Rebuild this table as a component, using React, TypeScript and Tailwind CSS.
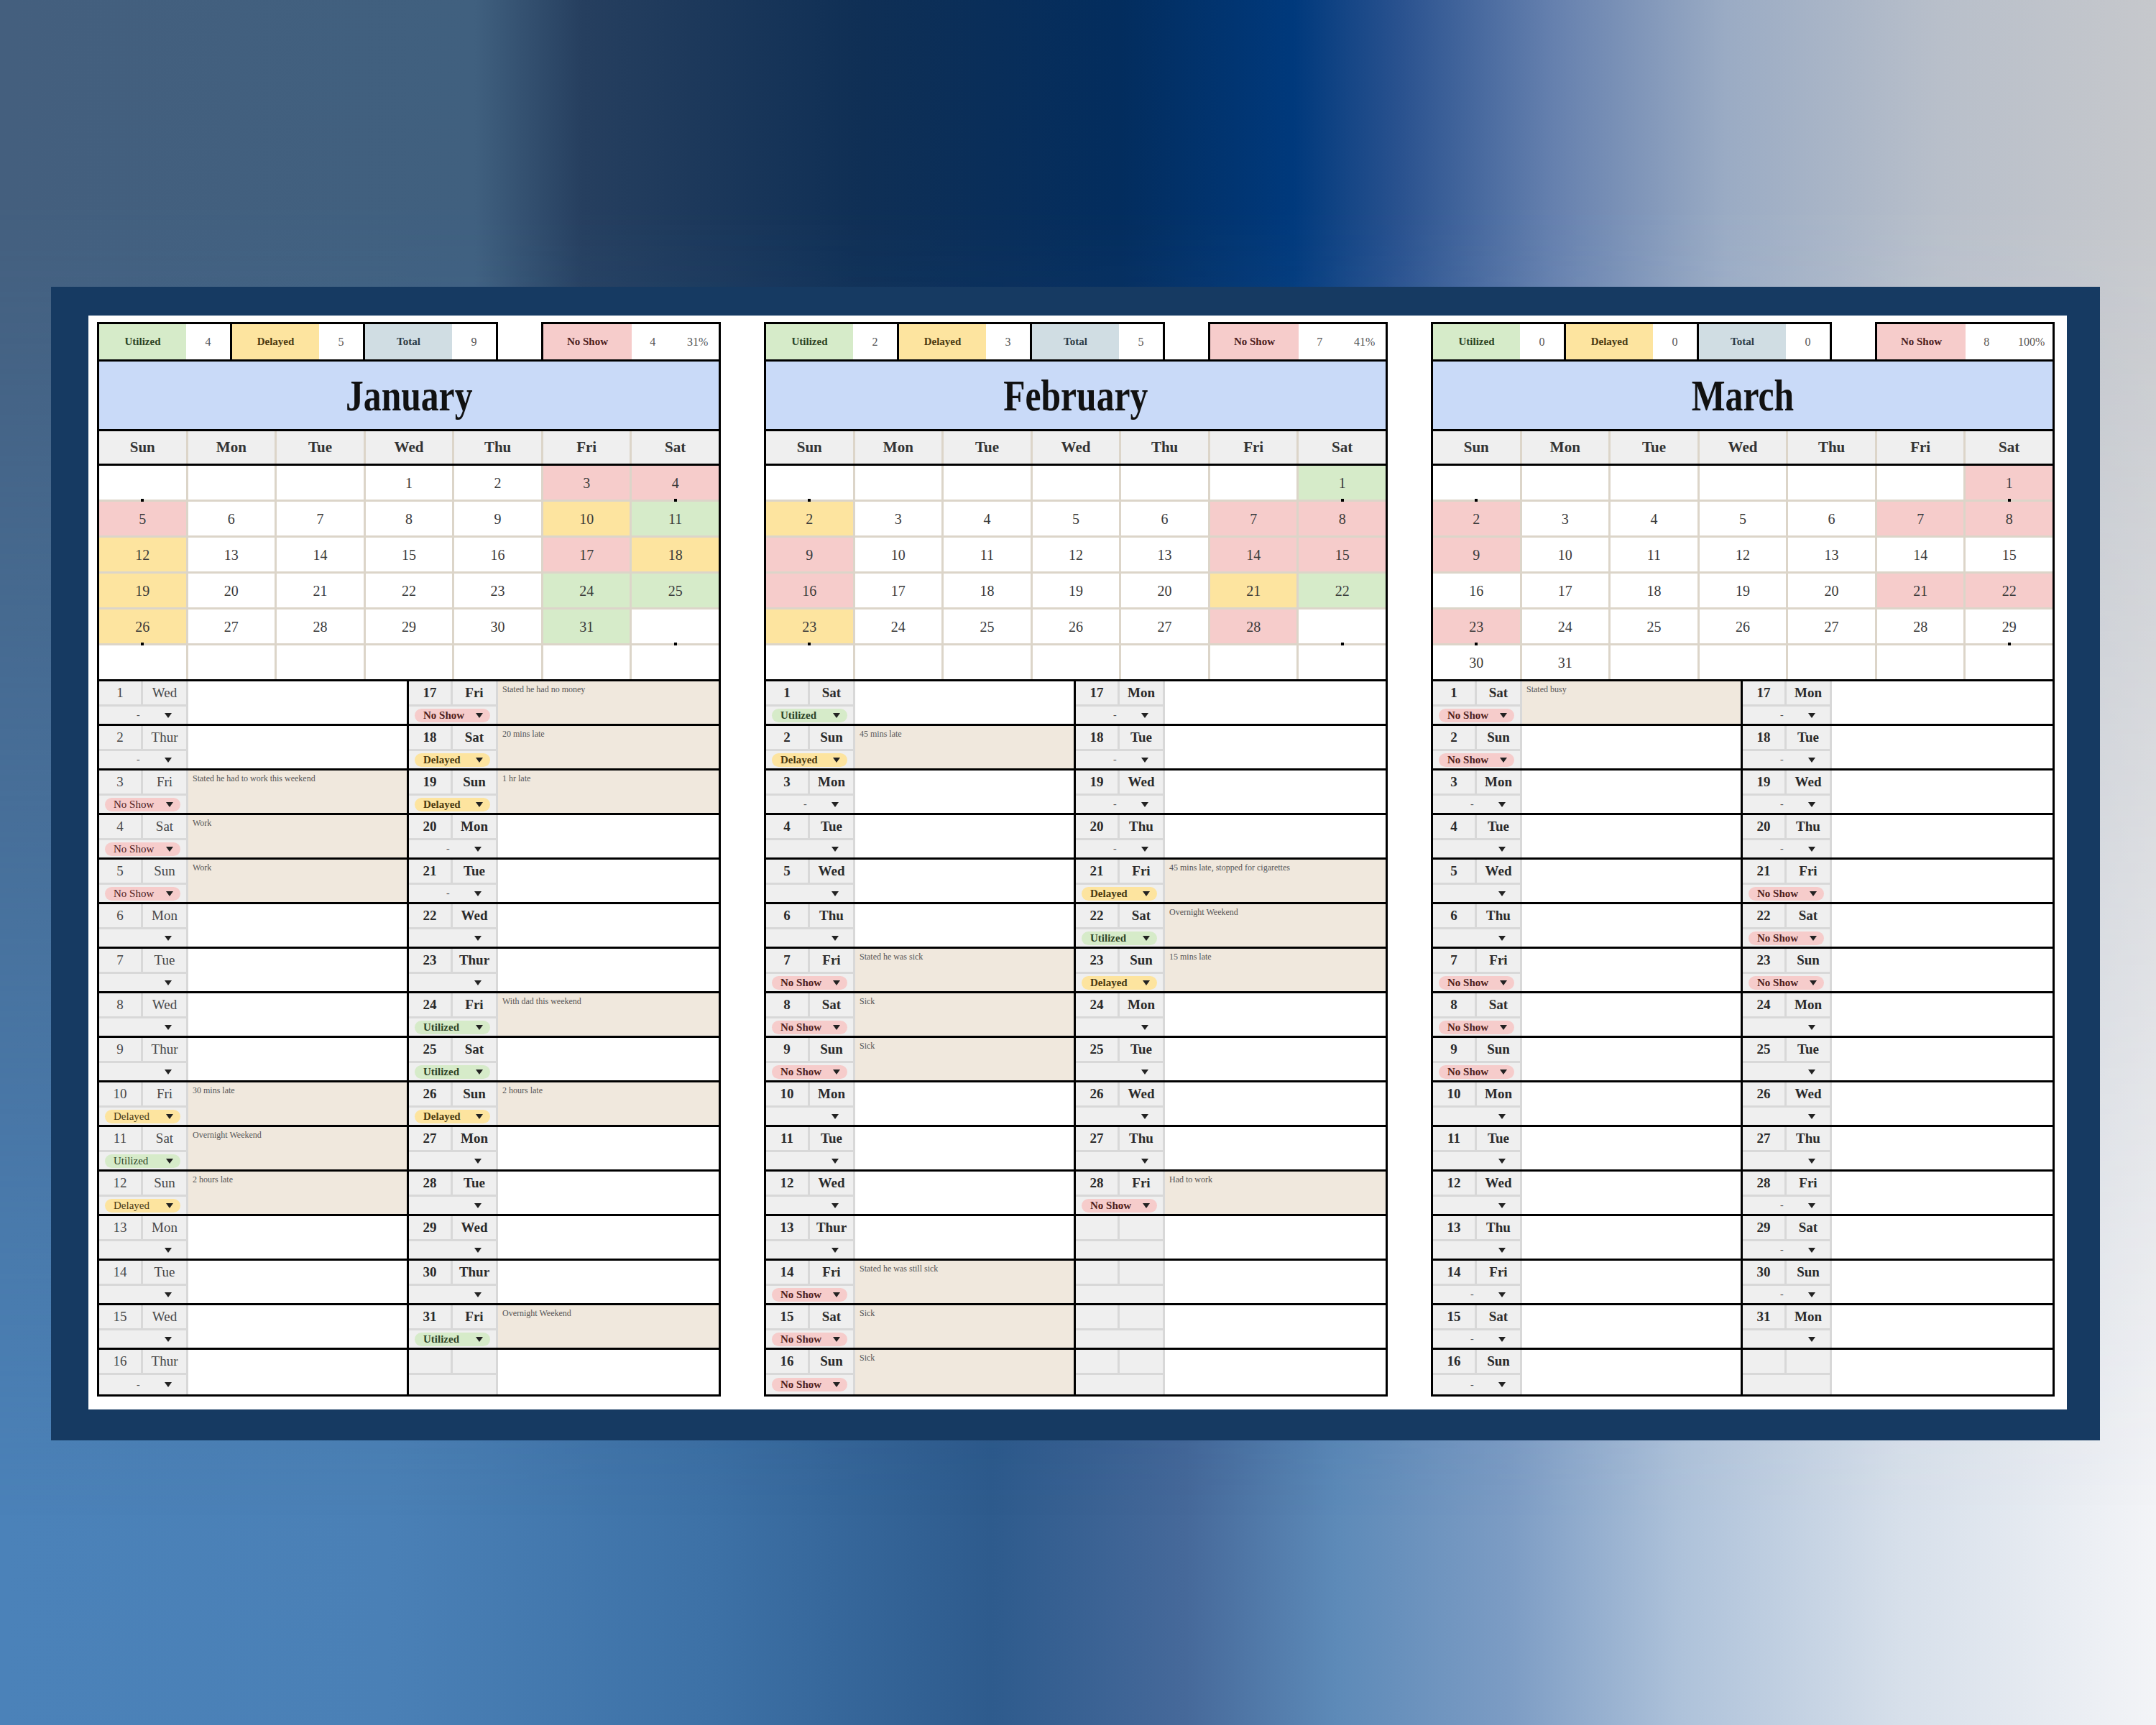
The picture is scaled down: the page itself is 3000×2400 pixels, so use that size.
import React from 'react';

type Status = 'U' | 'D' | 'N' | '-' | '';
type Entry = [number, string, Status, string?] | null;

interface MonthData {
  name: string;
  stats: { u: number; d: number; t: number; n: number; pct: string };
  offset: number;
  days: number;
  colors: Record<number, 'U' | 'D' | 'N'>;
  left: Entry[];
  right: Entry[];
  lightLeft?: boolean;
}

const cellBg: Record<'U' | 'D' | 'N', string> = {
  U: 'bg-[#d6ebc9]',
  D: 'bg-[#fde49f]',
  N: 'bg-[#f6cccb]',
};

const chipText: Record<'U' | 'D' | 'N', string> = {
  U: 'Utilized',
  D: 'Delayed',
  N: 'No Show',
};

const chipInk: Record<'U' | 'D' | 'N', string> = {
  U: 'text-[#2c4426]',
  D: 'text-[#4a3a12]',
  N: 'text-[#4e2020]',
};

const months: MonthData[] = [
  {
    name: 'January',
    stats: { u: 4, d: 5, t: 9, n: 4, pct: '31%' },
    offset: 3,
    days: 31,
    colors: { 3: 'N', 4: 'N', 5: 'N', 10: 'D', 11: 'U', 12: 'D', 17: 'N', 18: 'D', 19: 'D', 24: 'U', 25: 'U', 26: 'D', 31: 'U' },
    lightLeft: true,
    left: [
      [1, 'Wed', '-'],
      [2, 'Thur', '-'],
      [3, 'Fri', 'N', 'Stated he had to work this weekend'],
      [4, 'Sat', 'N', 'Work'],
      [5, 'Sun', 'N', 'Work'],
      [6, 'Mon', ''],
      [7, 'Tue', ''],
      [8, 'Wed', ''],
      [9, 'Thur', ''],
      [10, 'Fri', 'D', '30 mins late'],
      [11, 'Sat', 'U', 'Overnight Weekend'],
      [12, 'Sun', 'D', '2 hours late'],
      [13, 'Mon', ''],
      [14, 'Tue', ''],
      [15, 'Wed', ''],
      [16, 'Thur', '-'],
    ],
    right: [
      [17, 'Fri', 'N', 'Stated he had no money'],
      [18, 'Sat', 'D', '20 mins late'],
      [19, 'Sun', 'D', '1 hr late'],
      [20, 'Mon', '-'],
      [21, 'Tue', '-'],
      [22, 'Wed', ''],
      [23, 'Thur', ''],
      [24, 'Fri', 'U', 'With dad this weekend'],
      [25, 'Sat', 'U'],
      [26, 'Sun', 'D', '2 hours late'],
      [27, 'Mon', ''],
      [28, 'Tue', ''],
      [29, 'Wed', ''],
      [30, 'Thur', ''],
      [31, 'Fri', 'U', 'Overnight Weekend'],
      null,
    ],
  },
  {
    name: 'February',
    stats: { u: 2, d: 3, t: 5, n: 7, pct: '41%' },
    offset: 6,
    days: 28,
    colors: { 1: 'U', 2: 'D', 7: 'N', 8: 'N', 9: 'N', 14: 'N', 15: 'N', 16: 'N', 21: 'D', 22: 'U', 23: 'D', 28: 'N' },
    left: [
      [1, 'Sat', 'U'],
      [2, 'Sun', 'D', '45 mins late'],
      [3, 'Mon', '-'],
      [4, 'Tue', ''],
      [5, 'Wed', ''],
      [6, 'Thu', ''],
      [7, 'Fri', 'N', 'Stated he was sick'],
      [8, 'Sat', 'N', 'Sick'],
      [9, 'Sun', 'N', 'Sick'],
      [10, 'Mon', ''],
      [11, 'Tue', ''],
      [12, 'Wed', ''],
      [13, 'Thur', ''],
      [14, 'Fri', 'N', 'Stated he was still sick'],
      [15, 'Sat', 'N', 'Sick'],
      [16, 'Sun', 'N', 'Sick'],
    ],
    right: [
      [17, 'Mon', '-'],
      [18, 'Tue', '-'],
      [19, 'Wed', '-'],
      [20, 'Thu', '-'],
      [21, 'Fri', 'D', '45 mins late, stopped for cigarettes'],
      [22, 'Sat', 'U', 'Overnight Weekend'],
      [23, 'Sun', 'D', '15 mins late'],
      [24, 'Mon', ''],
      [25, 'Tue', ''],
      [26, 'Wed', ''],
      [27, 'Thu', ''],
      [28, 'Fri', 'N', 'Had to work'],
      null,
      null,
      null,
      null,
    ],
  },
  {
    name: 'March',
    stats: { u: 0, d: 0, t: 0, n: 8, pct: '100%' },
    offset: 6,
    days: 31,
    colors: { 1: 'N', 2: 'N', 7: 'N', 8: 'N', 9: 'N', 21: 'N', 22: 'N', 23: 'N' },
    left: [
      [1, 'Sat', 'N', 'Stated busy'],
      [2, 'Sun', 'N'],
      [3, 'Mon', '-'],
      [4, 'Tue', ''],
      [5, 'Wed', ''],
      [6, 'Thu', ''],
      [7, 'Fri', 'N'],
      [8, 'Sat', 'N'],
      [9, 'Sun', 'N'],
      [10, 'Mon', ''],
      [11, 'Tue', ''],
      [12, 'Wed', ''],
      [13, 'Thu', ''],
      [14, 'Fri', '-'],
      [15, 'Sat', '-'],
      [16, 'Sun', '-'],
    ],
    right: [
      [17, 'Mon', '-'],
      [18, 'Tue', '-'],
      [19, 'Wed', '-'],
      [20, 'Thu', '-'],
      [21, 'Fri', 'N'],
      [22, 'Sat', 'N'],
      [23, 'Sun', 'N'],
      [24, 'Mon', ''],
      [25, 'Tue', ''],
      [26, 'Wed', ''],
      [27, 'Thu', ''],
      [28, 'Fri', '-'],
      [29, 'Sat', '-'],
      [30, 'Sun', '-'],
      [31, 'Mon', ''],
      null,
    ],
  },
];

const weekdays = ['Sun', 'Mon', 'Tue', 'Wed', 'Thu', 'Fri', 'Sat'];

function Caret() {
  return (
    <svg width="10" height="7" viewBox="0 0 10 7" className="shrink-0">
      <path d="M0 0h10L5 7z" fill="#222" />
    </svg>
  );
}

function StatusCell({ status, light }: { status: Status; light?: boolean }) {
  if (status === 'U' || status === 'D' || status === 'N') {
    return (
      <div
        className={`flex h-[19px] w-[106px] items-center justify-between rounded-full pl-[12px] pr-[10px] text-[15px] leading-none ${cellBg[status]} ${chipInk[status]} ${light ? 'font-normal' : 'font-bold'}`}
      >
        <span>{chipText[status]}</span>
        <Caret />
      </div>
    );
  }
  return (
    <div className="flex w-full items-center">
      <span className="ml-[44px] w-[10px] text-[14px] leading-none text-[#555]">{status === '-' ? '-' : ''}</span>
      <span className="ml-auto mr-[12px] flex">
        <Caret />
      </span>
    </div>
  );
}

function DayEntry({ entry, light }: { entry: Entry; light?: boolean }) {
  const ink = light ? 'font-normal text-[#474747]' : 'font-bold text-[#2a2a2a]';
  const note = entry?.[3];
  return (
    <div className="flex min-w-0 flex-1">
      <div className="grid w-[124px] shrink-0 grid-cols-[58px_1fr] grid-rows-[32px_1fr] gap-[3px] bg-[#d8d8d8] pr-[3px]">
        <div className={`flex items-center justify-center bg-[#efefef] text-[19px] ${ink}`}>{entry?.[0]}</div>
        <div className={`flex items-center justify-center bg-[#efefef] text-[19px] ${ink}`}>{entry?.[1]}</div>
        <div className="col-span-2 flex items-center bg-[#efefef] px-[8px]">
          {entry && <StatusCell status={entry[2]} light={light} />}
        </div>
      </div>
      <div className={`flex-1 px-[6px] pt-[4px] text-[12px] leading-tight text-[#555] ${note ? 'bg-[#f0e8dd]' : 'bg-white'}`}>
        {note}
      </div>
    </div>
  );
}

function StatGroup({ label, value, bg, ink, first }: { label: string; value: number; bg: string; ink: string; first?: boolean }) {
  return (
    <div className={`flex h-full border-t-[3px] border-r-[3px] border-black ${first ? 'w-[188px] border-l-[3px]' : 'w-[185px]'}`}>
      <div className={`flex w-[121px] items-center justify-center text-[15px] font-bold ${bg} ${ink}`}>{label}</div>
      <div className="flex flex-1 items-center justify-center bg-white text-[16px] text-[#555]">{value}</div>
    </div>
  );
}

function MonthPanel({ m }: { m: MonthData }) {
  const cells = Array.from({ length: 42 }, (_, i) => {
    const d = i - m.offset + 1;
    return d >= 1 && d <= m.days ? d : null;
  });

  return (
    <div className="flex w-[868px] shrink-0 flex-col">
      <div className="flex h-[52px]">
        <StatGroup first label="Utilized" value={m.stats.u} bg="bg-[#d6ebc9]" ink="text-[#2c4426]" />
        <StatGroup label="Delayed" value={m.stats.d} bg="bg-[#fde49f]" ink="text-[#4a3a12]" />
        <StatGroup label="Total" value={m.stats.t} bg="bg-[#d0dde3]" ink="text-[#2d3c46]" />
        <div className="w-[60px]" />
        <div className="flex w-[250px] border-x-[3px] border-t-[3px] border-black">
          <div className="flex w-[123px] items-center justify-center bg-[#f6cccb] text-[15px] font-bold text-[#4e2020]">No Show</div>
          <div className="flex flex-1 items-center justify-center text-[16px] text-[#555]">{m.stats.n}</div>
          <div className="flex flex-1 items-center justify-center pl-[4px] text-[16px] text-[#555]">{m.stats.pct}</div>
        </div>
      </div>

      <div className="flex h-[100px] items-center justify-center border-[3px] border-black bg-[#c9daf8]">
        <span className="inline-block scale-x-[0.8] text-[62px] font-bold leading-none text-[#111]">{m.name}</span>
      </div>

      <div className="grid h-[48px] grid-cols-7 gap-x-[3px] border-x-[3px] border-b-[3px] border-black bg-[#dcd5c9]">
        {weekdays.map(w => (
          <div key={w} className="flex items-center justify-center bg-[#efefef] text-[21px] font-bold text-[#333]">
            {w}
          </div>
        ))}
      </div>

      <div className="grid h-[297px] grid-cols-7 grid-rows-6 gap-[3px] border-x-[3px] border-black bg-[#dcd5c9]">
        {cells.map((d, i) => {
          const col = i % 7;
          const row = Math.floor(i / 7);
          const dot = (col === 0 || col === 6) && (row === 1 || row === 5);
          const color = d ? m.colors[d] : undefined;
          return (
            <div
              key={i}
              className={`relative flex items-center justify-center text-[20px] text-[#3a3a3a] ${color ? cellBg[color] : 'bg-white'}`}
            >
              {d}
              {dot && <span className="absolute -top-[4px] left-1/2 h-[4px] w-[4px] -translate-x-1/2 bg-black" />}
            </div>
          );
        })}
      </div>

      <div className="flex flex-col border-[3px] border-black">
        {m.left.map((entry, i) => (
          <div key={i} className={`flex h-[62px] ${i < 15 ? 'border-b-[3px] border-black' : 'h-[59px]'}`}>
            <div className="flex w-[431px] shrink-0 border-r-[3px] border-black">
              <DayEntry entry={entry} light={m.lightLeft} />
            </div>
            <DayEntry entry={m.right[i]} />
          </div>
        ))}
      </div>
    </div>
  );
}

export default function App() {
  return (
    <div className="relative h-[2400px] w-[3000px] overflow-hidden bg-[linear-gradient(to_right,#4b82b9_0%,#4a80b6_18%,#3d71a6_33%,#2e5b8d_46%,#46699a_55%,#5d8ab8_62%,#7c9cc4_70%,#aec2da_78%,#d6dfea_88%,#f3f4f7_100%)] font-['Liberation_Serif',serif]">
      <div className="absolute inset-0 bg-[linear-gradient(to_right,#445f7e_0%,#40607f_22%,#263f5f_27%,#0f2f55_40%,#032d5e_52%,#00397c_60%,#2a528f_65%,#6580ae_72%,#9aabc4_80%,#b8bfca_90%,#c6c8cc_100%)] [mask-image:linear-gradient(to_bottom,black_0%,black_12%,transparent_88%)]" />
      <div className="relative pl-[71px] pt-[399px]">
        <div className="h-[1605px] w-[2851px] bg-[#163a62] pl-[52px] pt-[40px]">
          <div className="flex h-[1522px] w-[2753px] gap-[60px] bg-white pl-[12px] pt-[9px]">
            {months.map(m => (
              <MonthPanel key={m.name} m={m} />
            ))}
          </div>
        </div>
      </div>
    </div>
  );
}
